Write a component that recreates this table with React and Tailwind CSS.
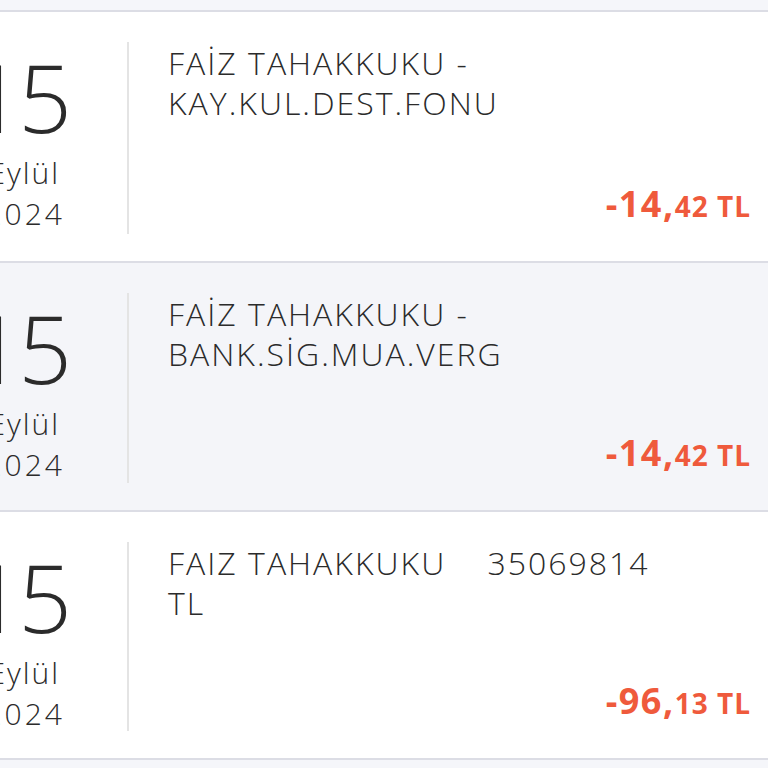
import React from 'react'

const rows = [
  { h: 'h-[251px]', month: 'Eylül', year: '2024', title: 'FAİZ TAHAKKUKU - KAY.KUL.DEST.FONU', whole: '-14,', cents: '42 TL', shaded: false },
  { h: 'h-[249px]', month: 'Eylül', year: '2024', title: 'FAİZ TAHAKKUKU - BANK.SİG.MUA.VERG', whole: '-14,', cents: '42 TL', shaded: true },
  { h: 'h-[248px]', month: 'Eylül', year: '2024', title: 'FAIZ TAHAKKUKU    35069814 TL', whole: '-96,', cents: '13 TL', shaded: false },
]

const Row = ({ r }) => (
  <div className={`flex ${r.h} border-b-2 border-[#dcdde5] ${r.shaded ? 'bg-[#f4f5f9]' : 'bg-white'}`}>
    {/* date column, partly cut off on the left */}
    <div className="w-[127px] shrink-0 flex flex-col items-end pt-[38px] pr-[57px] text-[#2b2b2b] whitespace-nowrap">
      <div className="text-[94px] leading-[94px] font-light -mr-[2px]">
        <span className="tracking-[-5px]">1</span>5
      </div>
      <div className="mt-[8px] text-[30px] leading-[41px] font-light tracking-[2px] mr-[10px]">{r.month}</div>
      <div className="text-[30px] leading-[41px] font-light tracking-[3px] mr-[5px]">{r.year}</div>
    </div>

    <div className="flex-1 flex flex-col mt-[30px] mb-[27px] border-l-2 border-[#e4e4e4] pl-[39px] pr-[17px]">
      <div className="pt-[1px] max-w-[500px] text-[32px] leading-[40px] font-light tracking-[2px] text-[#2b2b2b] whitespace-pre-wrap">
        {r.title}
      </div>
      <div className="mt-auto pb-[10px] text-right font-bold text-[#ef5a3c] tracking-[1px]">
        <span className="text-[36px] leading-[36px] tracking-[1.5px]">{r.whole}</span>
        <span className="text-[28px] leading-[36px]">{r.cents}</span>
      </div>
    </div>
  </div>
)

export default function App() {
  return (
    <div className="w-[768px] h-[768px] overflow-hidden bg-[#f5f6fa]" style={{ fontFamily: '"Open Sans", "Noto Sans", sans-serif' }}>
      <div className="h-[10px] border-b-2 border-[#dcdde5] box-content" />
      {rows.map((r, i) => (
        <Row key={i} r={r} />
      ))}
    </div>
  )
}
